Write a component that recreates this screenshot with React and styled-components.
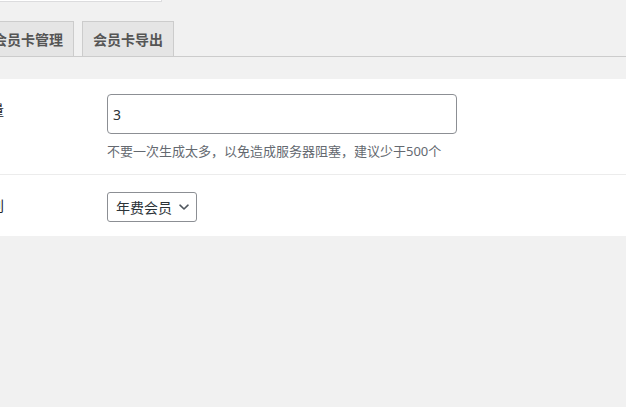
import styled, { createGlobalStyle } from "styled-components";

const GlobalStyle = createGlobalStyle`
	html, body {
		margin: 0;
		padding: 0;
		background: #f1f1f1;
		overflow: hidden;
	}
	body {
		font-family: "Noto Sans", "Noto Sans CJK SC", sans-serif;
		font-size: 14px;
		color: #1d2327;
	}
`;

export default function App() {
	return (
		<>
			<GlobalStyle />
			<Page>
				<SearchBox />
				<TabBar>
					<Tab>会员卡管理</Tab>
					<Tab>会员卡导出</Tab>
				</TabBar>
				<Panel>
					<Row>
						<Label>生成数量</Label>
						<Field $bottom={13}>
							<TextInput defaultValue="3" />
							<Description>
								不要一次生成太多，以免造成服务器阻塞，建议少于500个
							</Description>
						</Field>
					</Row>
					<Row $last>
						<Label>会员类别</Label>
						<Field $top={17}>
							<Select type="button">
								年费会员
								<svg width="12" height="12" viewBox="0 0 12 12">
									<path
										d="M2 4.2 L6 8 L10 4.2"
										fill="none"
										stroke="#50575e"
										strokeWidth="1.6"
										strokeLinecap="round"
										strokeLinejoin="round"
									/>
								</svg>
							</Select>
						</Field>
					</Row>
				</Panel>
			</Page>
		</>
	);
}

const Page = styled.div`
	margin-left: -70px;
	width: calc(100% + 70px);
`;

const SearchBox = styled.div`
	width: 232px;
	height: 26px;
	margin-top: -24px;
	background: #ffffff;
	border-right: 1px solid #dcdcde;
	border-bottom: 1px solid #dcdcde;
	box-sizing: border-box;
`;

const TabBar = styled.div`
	display: flex;
	gap: 8px;
	margin-top: 19px;
	padding-left: 52px;
	border-bottom: 1px solid #cccccc;
`;

const Tab = styled.a`
	display: block;
	padding: 5px 10px;
	line-height: 24px;
	font-size: 14px;
	font-weight: 600;
	color: #555555;
	background: #e5e5e5;
	border: 1px solid #cccccc;
	border-bottom: none;
	font-family: "Noto Sans CJK SC", sans-serif;
`;

const Panel = styled.div`
	margin-top: 22px;
	background: #ffffff;
	box-shadow: 0 1px 0 #e2e2e2;
`;

const Row = styled.div`
	display: grid;
	grid-template-columns: 159px 1fr;
	padding-left: 18px;
	border-bottom: ${(p) => (p.$last ? "none" : "1px solid #ececec")};
`;

const Label = styled.div`
	padding-top: 21px;
	font-size: 14px;
	line-height: 18px;
	color: #1d2327;
	font-family: "Noto Sans CJK SC", sans-serif;
`;

const Field = styled.div`
	padding: ${(p) => p.$top ?? 15}px 0 ${(p) => p.$bottom ?? 14}px;
	display: flex;
	flex-direction: column;
	align-items: flex-start;
`;

const TextInput = styled.input`
	width: 350px;
	height: 40px;
	box-sizing: border-box;
	padding: 0 5px;
	border: 1px solid #8c8f94;
	border-radius: 4px;
	font-family: "Noto Sans", "Noto Sans CJK SC", sans-serif;
	font-size: 14px;
	color: #2c3338;
	background: #ffffff;
	outline: none;
`;

const Description = styled.p`
	margin: 7px 0 0;
	font-size: 13px;
	line-height: 20px;
	color: #646970;
	font-family: "Noto Sans", "Noto Sans CJK SC", sans-serif;
`;

const Select = styled.button`
	display: flex;
	align-items: center;
	gap: 6px;
	height: 30px;
	width: 90px;
	box-sizing: border-box;
	padding: 0 6px 0 8px;
	border: 1px solid #8c8f94;
	border-radius: 3px;
	background: #ffffff;
	color: #2c3338;
	font-size: 14px;
	font-family: "Noto Sans CJK SC", sans-serif;
	cursor: pointer;
`;
